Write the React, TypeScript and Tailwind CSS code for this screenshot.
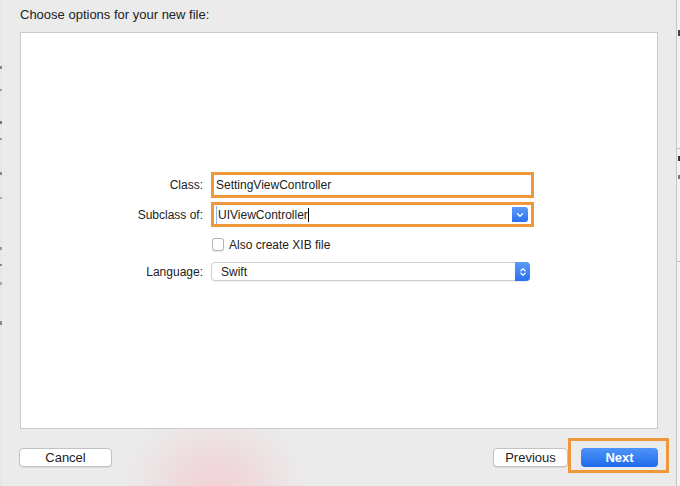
import { ChevronDown, ChevronsUpDown } from 'lucide-react';

const font = { fontFamily: '"Liberation Sans", Arial, sans-serif' };

function Label({ text }: { text: string }) {
  return <div className="w-[182px] text-right text-[12px] text-[#222]">{text}</div>;
}

export default function App() {
  return (
    <div
      style={font}
      className="w-[680px] h-[486px] overflow-hidden flex bg-[#ebebeb] bg-[radial-gradient(ellipse_95px_80px_at_215px_486px,#f2d2d8,#efd9dc_35%,#ece3e4_65%,#ebebeb)]"
    >
      {/* left edge of window behind */}
      <div className="w-[2px] h-full flex flex-col bg-[#e6e6e6]">
        <span className="mt-[66px] h-[3px] bg-[#888]" />
        <span className="mt-[20px] h-[2px] bg-[#999]" />
        <span className="mt-[30px] h-[3px] bg-[#777]" />
        <span className="mt-[14px] h-[2px] bg-[#999]" />
        <span className="mt-[32px] h-[3px] bg-[#888]" />
        <span className="mt-[22px] h-[2px] bg-[#aaa]" />
        <span className="mt-[48px] h-[3px] bg-[#999]" />
        <span className="mt-[14px] h-[2px] bg-[#888]" />
        <span className="mt-[16px] h-[3px] bg-[#aaa]" />
        <span className="mt-[36px] h-[4px] bg-[#888]" />
      </div>

      <div className="w-[674px] h-full flex flex-col">
        <div className="h-[32px] pl-[18px] pt-[7px] text-[13px] leading-[16px] text-[#222]">
          Choose options for your new file:
        </div>

        <div className="ml-[18px] w-[638px] h-[397px] bg-white border border-[#cacaca] flex flex-col pt-[139px]">
          {/* Class */}
          <div className="flex items-center h-[26px]">
            <Label text="Class:" />
            <div className="ml-[8px] w-[323px] h-[26px] border-[3px] border-[#ee983b] bg-white flex items-center pl-[2px] text-[12px] text-[#222]">
              SettingViewController
            </div>
          </div>

          {/* Subclass */}
          <div className="flex items-center h-[25px] mt-[4px]">
            <Label text="Subclass of:" />
            <div className="ml-[8px] w-[323px] h-[25px] border-[3px] border-[#ee983b] bg-white flex items-center pl-[2px] pr-[3px]">
              <div className="flex-1 flex items-center text-[12px] text-[#222] border-l border-[#8fb4ee] pl-[1px]">
                UIViewController
                <span className="w-[1px] h-[14px] bg-black" />
              </div>
              <div className="w-[16px] h-[15px] rounded-r-[3px] bg-gradient-to-b from-[#5c9bf8] to-[#2c6ff0] flex items-center justify-center">
                <ChevronDown className="w-[10px] h-[10px] text-white" strokeWidth={3} />
              </div>
            </div>
          </div>

          {/* XIB */}
          <div className="flex items-center h-[13px] mt-[11px]">
            <div className="w-[182px]" />
            <div className="ml-[9px] w-[12px] h-[13px] rounded-[3px] border border-[#b3b3b3] bg-white shadow-[0_0.5px_1px_rgba(0,0,0,0.1)]" />
            <span className="ml-[5px] text-[12px] text-[#222]">Also create XIB file</span>
          </div>

          {/* Language */}
          <div className="flex items-center h-[19px] mt-[11px]">
            <Label text="Language:" />
            <div className="ml-[8px] w-[319px] h-[19px] rounded-[4px] border border-[#cfcfcf] bg-white shadow-[0_1px_1px_rgba(0,0,0,0.08)] flex items-center">
              <span className="flex-1 pl-[9px] text-[12px] text-[#222]">Swift</span>
              <div className="w-[15px] h-[19px] -mr-[1px] rounded-r-[4px] bg-gradient-to-b from-[#5c9bf8] to-[#2c6ff0] flex items-center justify-center">
                <ChevronsUpDown className="w-[10px] h-[12px] text-white" strokeWidth={3} />
              </div>
            </div>
          </div>
        </div>

        {/* buttons */}
        <div className="flex items-start ml-[17px] mr-[7px]">
          <button className="mt-[19px] w-[93px] h-[19px] rounded-[4px] bg-white border border-[#c2c2c2] shadow-[0_1px_1px_rgba(0,0,0,0.08)] text-[13px] leading-[17px] text-[#222]">
            Cancel
          </button>
          <div className="flex-1" />
          <button className="mt-[19px] w-[75px] h-[19px] rounded-[4px] bg-white border border-[#c2c2c2] shadow-[0_1px_1px_rgba(0,0,0,0.08)] text-[13px] leading-[17px] text-[#222]">
            Previous
          </button>
          <div className="mt-[9px] flex border-[3px] border-[#ee983b] pl-[10px] pr-[8px] pt-[7px] pb-[3px]">
            <button className="w-[77px] h-[19px] rounded-[4px] bg-gradient-to-b from-[#4e94f8] to-[#1f69ec] text-[13px] leading-[19px] font-bold text-white">
              Next
            </button>
          </div>
        </div>
      </div>

      {/* right edge of window behind */}
      <div className="w-[4px] h-full border-l border-[#c4c4c4] bg-[#f4f4f4] flex flex-col">
        <span className="mt-[30px] ml-[1px] w-[2px] h-[6px] bg-[#444]" />
        <span className="mt-[112px] h-[1px] bg-[#bdbdbd]" />
        <span className="mt-[7px] ml-[1px] w-[2px] h-[5px] bg-[#333]" />
        <span className="mt-[14px] ml-[1px] w-[2px] h-[4px] bg-[#777]" />
        <span className="mt-[82px] h-[1px] bg-[#bdbdbd]" />
      </div>
    </div>
  );
}
